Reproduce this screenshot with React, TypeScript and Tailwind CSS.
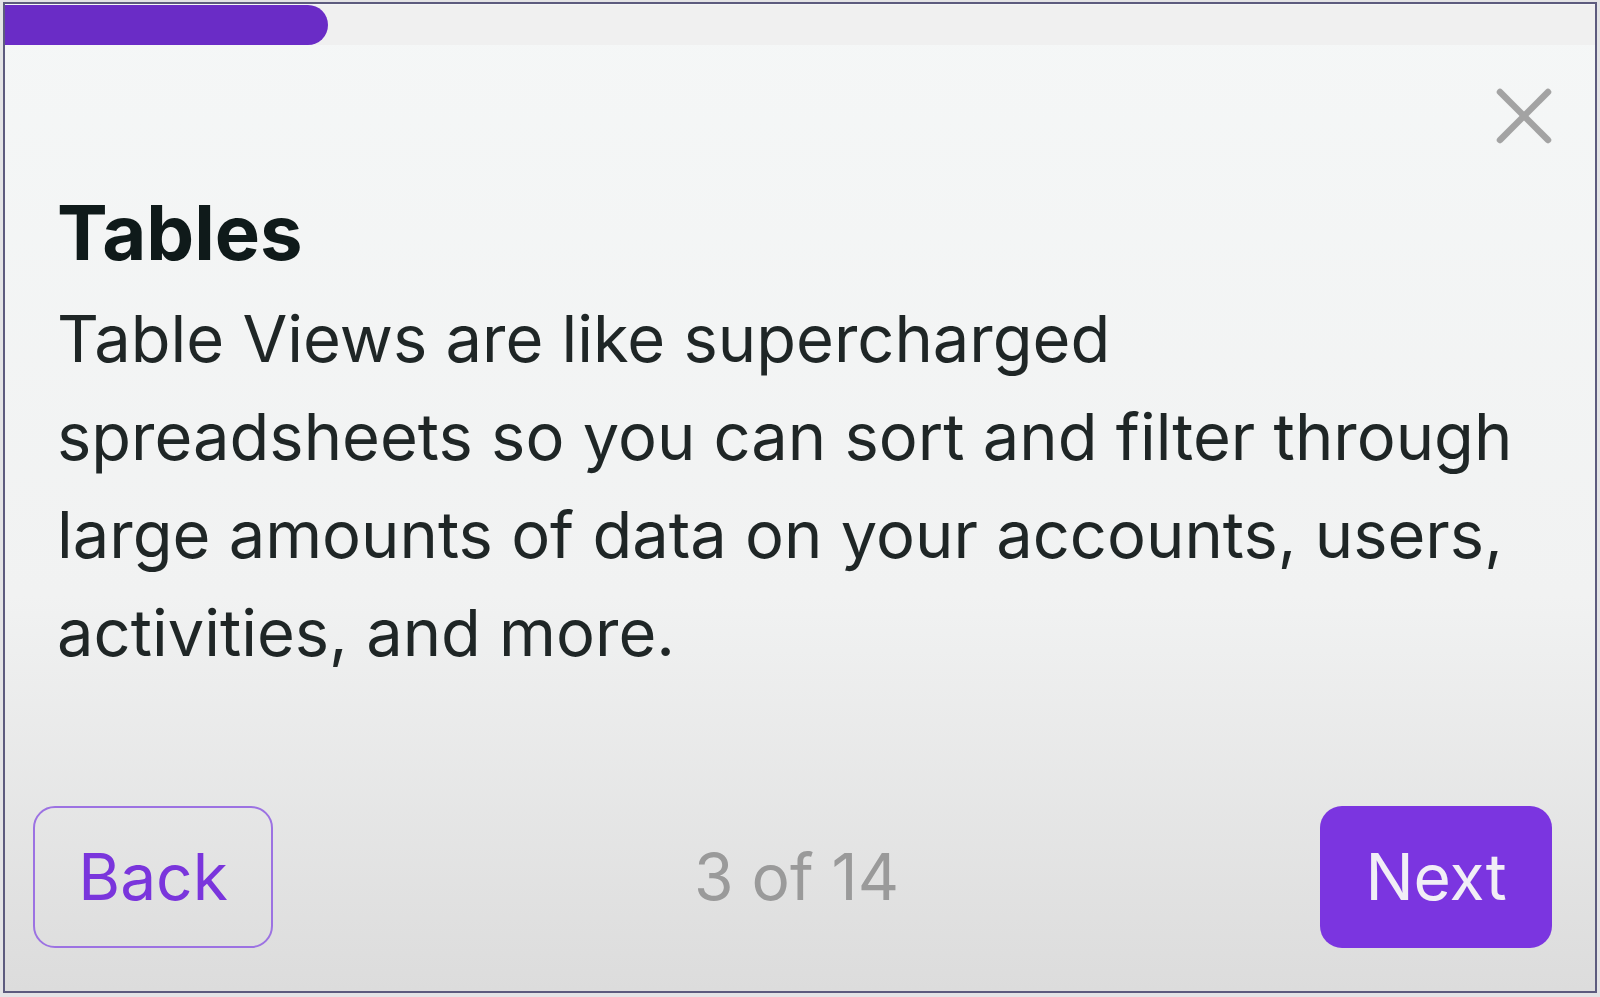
export default function App() {
  return (
    <div className="w-[1600px] h-[997px] bg-[#e4e4e6] pl-[3px] pt-[2px] pr-[3px] pb-[4px]" style={{ fontFamily: "Inter, 'Noto Sans', sans-serif" }}>
      <div className="relative flex h-full flex-col overflow-hidden border-[2px] border-[#5d5b7e] bg-gradient-to-b from-[#f5f7f7] via-[#f1f2f2] via-60% to-[#dcdcdc]">
        {/* progress */}
        <div className="h-[40px] mt-[1px] bg-[#f0f0f0]">
          <div className="h-full w-[323px] rounded-r-[20px] bg-[#6a2cc6]" />
        </div>

        {/* close */}
        <button className="absolute right-[41px] top-[82px]">
          <svg width="60" height="60" viewBox="0 0 60 60" fill="none" stroke="#a3a3a3" strokeWidth="6.5" strokeLinecap="round">
            <line x1="6" y1="6" x2="54" y2="54" />
            <line x1="54" y1="6" x2="6" y2="54" />
          </svg>
        </button>

        <div className="pl-[52px] pt-[142px]">
          <div className="text-[76px] font-bold leading-[91px] text-[#0f1a1a]">Tables</div>
          <p className="mt-[12px] w-[1470px] text-[65px] leading-[98px] text-[#1f2626]">
            Table Views are like supercharged spreadsheets so you can sort and filter through large amounts of data on your accounts, users, activities, and more.
          </p>
        </div>

        <div className="mt-auto flex items-center justify-between pb-[43px] pl-[28px] pr-[43px]">
          <button className="flex h-[142px] w-[240px] items-center justify-center rounded-[22px] border-[2px] border-[#9c72e2] text-[64px] text-[#7a35dc]">
            Back
          </button>
          <div className="text-[64px] text-[#9a9a9a]">3 of 14</div>
          <button className="flex h-[142px] w-[232px] items-center justify-center rounded-[22px] bg-[#7b35e0] text-[64px] text-[#f1eef6]">
            Next
          </button>
        </div>
      </div>
    </div>
  );
}
